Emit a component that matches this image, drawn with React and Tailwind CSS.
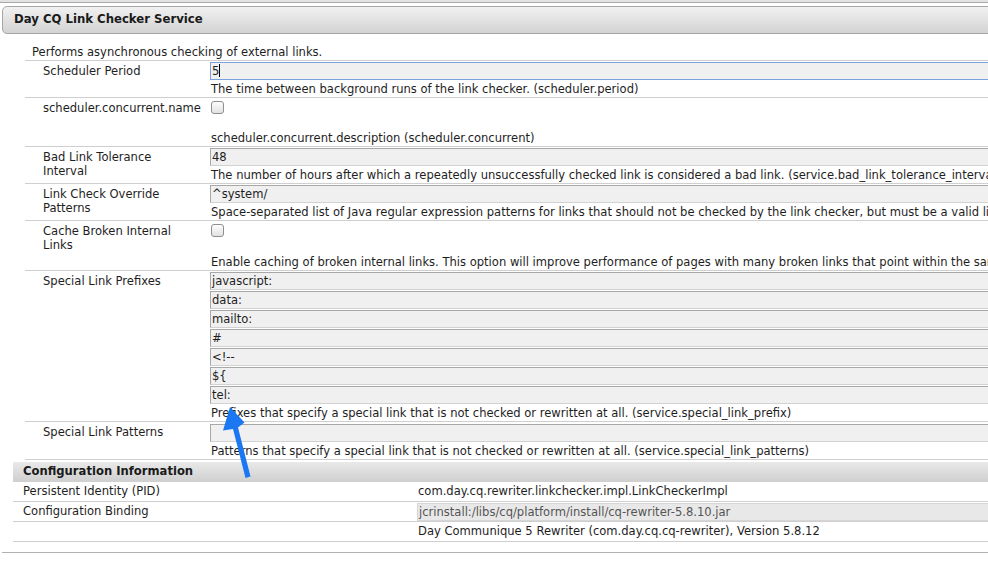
import React from "react";

const font = { fontFamily: '"DejaVu Sans", Verdana, sans-serif' };

function Field({ value, focused }) {
  return (
    <div
      className={`h-[18px] w-[1200px] bg-[#f0f0f0] pl-[1px] leading-[16px] border ${
        focused
          ? "border-[#7aa3dd]"
          : "border-[#a8a8a8] border-b-[#d2d2d2] border-r-[#d2d2d2]"
      }`}
    >
      {value}
      {focused && <span className="inline-block w-px h-[13px] bg-black align-[-2px]" />}
    </div>
  );
}

function Checkbox({ tall }) {
  return (
    <div className={`${tall ? "h-[31px]" : "h-[30px]"} pt-[2px] pl-[1px]`}>
      <div className="w-[13px] h-[13px] rounded-[3px] border border-[#8f8f8f] bg-linear-to-b from-[#fdfdfd] to-[#e2e2e2]" />
    </div>
  );
}

function Row({ label, children, desc }) {
  return (
    <div className="ml-[25px] w-[1600px] grid grid-cols-[185px_1fr] border-b border-[#cfcfcf]">
      <div className="pl-[18px] pt-[3px] leading-[14px] whitespace-nowrap">
        {label.map((l, i) => (
          <div key={i}>{l}</div>
        ))}
      </div>
      <div className="pt-[1px]">
        {children}
        <div className="relative top-[1px] pl-[1px] leading-[17px] whitespace-nowrap">{desc}</div>
      </div>
    </div>
  );
}

export default function App() {
  const prefixes = ["javascript:", "data:", "mailto:", "#", "<!--", "${", "tel:"];

  return (
    <div className="relative w-[988px] h-[574px] overflow-hidden bg-white text-[11.55px] text-[#1e1e1e]" style={font}>
      {/* top strip */}
      <div className="h-[3px] bg-[#e2e2e2] border-b border-[#a9a9a9]" />

      {/* service header */}
      <div className="mt-[3px] ml-[2px] w-[1600px] h-[28px] flex items-center pl-[11px] rounded-l-[5px] border border-[#a6a6a6] bg-linear-to-b from-[#f1f1f1] to-[#d3d3d3] text-[11.7px] font-bold text-[#1a1a1a]">
        Day CQ Link Checker Service
      </div>

      <div className="ml-[25px] w-[1600px] pl-[7px] pt-[11px] pb-[1px] leading-[14px] border-b border-[#cfcfcf]">
        Performs asynchronous checking of external links.
      </div>

      <Row label={["Scheduler Period"]} desc="The time between background runs of the link checker. (scheduler.period)">
        <Field value="5" focused />
      </Row>

      <Row label={["scheduler.concurrent.name"]} desc="scheduler.concurrent.description (scheduler.concurrent)">
        <Checkbox />
      </Row>

      <Row
        label={["Bad Link Tolerance", "Interval"]}
        desc="The number of hours after which a repeatedly unsuccessfully checked link is considered a bad link. (service.bad_link_tolerance_interval)"
      >
        <Field value="48" />
      </Row>

      <Row
        label={["Link Check Override", "Patterns"]}
        desc="Space-separated list of Java regular expression patterns for links that should not be checked by the link checker, but must be a valid link."
      >
        <Field value="^system/" />
      </Row>

      <Row
        label={["Cache Broken Internal", "Links"]}
        desc="Enable caching of broken internal links. This option will improve performance of pages with many broken links that point within the same site."
      >
        <Checkbox tall />
      </Row>

      <Row
        label={["Special Link Prefixes"]}
        desc="Prefixes that specify a special link that is not checked or rewritten at all. (service.special_link_prefix)"
      >
        <div className="flex flex-col gap-[1px]">
          {prefixes.map((p) => (
            <Field key={p} value={p} />
          ))}
        </div>
      </Row>

      <Row
        label={["Special Link Patterns"]}
        desc="Patterns that specify a special link that is not checked or rewritten at all. (service.special_link_patterns)"
      >
        <div className="pt-[1px]">
          <Field value="" />
        </div>
      </Row>

      {/* configuration information */}
      <div className="mt-[2px] ml-[13px] w-[1600px] h-[20px] flex items-center pl-[10px] bg-linear-to-b from-[#e9e9e9] to-[#cfcfcf] text-[11.6px] font-bold text-[#1a1a1a]">
        Configuration Information
      </div>
      <div className="ml-[13px] w-[1600px]">
        <div className="grid grid-cols-[404px_1fr] h-[20px] items-center border-b border-[#cfcfcf]">
          <div className="pl-[10px]">Persistent Identity (PID)</div>
          <div className="pl-[1px]">com.day.cq.rewriter.linkchecker.impl.LinkCheckerImpl</div>
        </div>
        <div className="grid grid-cols-[404px_1fr] h-[20px] items-center border-b border-[#cfcfcf]">
          <div className="pl-[10px]">Configuration Binding</div>
          <div className="h-[18px] bg-[#e8e8e8] border border-[#d6d6d6] pl-[1px] leading-[16px] text-[#555]">
            jcrinstall:/libs/cq/platform/install/cq-rewriter-5.8.10.jar
          </div>
        </div>
        <div className="grid grid-cols-[404px_1fr] h-[20px] items-center border-b border-[#cfcfcf]">
          <div />
          <div className="pl-[1px]">Day Communique 5 Rewriter (com.day.cq.cq-rewriter), Version 5.8.12</div>
        </div>
      </div>
      <div className="mt-[10px] ml-[2px] w-[1600px] border-t border-[#b0b0b0]" />

      {/* annotation arrow */}
      <svg className="absolute left-0 top-0 pointer-events-none" width="988" height="574">
        <polygon
          points="230,407 244.5,422.5 238,427.5 250.5,476.5 245.5,478 233,429 223,430.5"
          fill="#1b78f2"
        />
      </svg>
    </div>
  );
}
